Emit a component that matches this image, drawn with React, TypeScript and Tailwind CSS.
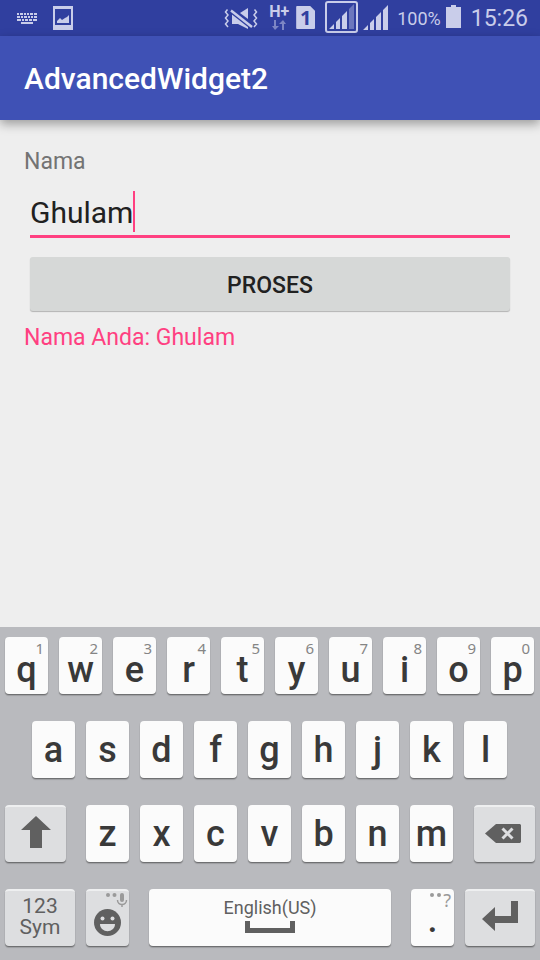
import { useState, type ReactNode } from "react";

const KEY = "flex h-[57px] rounded-[4px] shadow-[0_1px_1px_rgba(0,0,0,0.35),0_2px_1px_rgba(0,0,0,0.12)]";
const LIGHT = "bg-[#fbfbfb]";
const GREY = "bg-[#dddee0] border-t-2 border-[#eeeff0]";

function LetterKey({ letter, hint }: { letter: string; hint?: string }) {
  return (
    <button type="button" className={`${KEY} ${LIGHT} relative min-w-0 flex-1 justify-center ${hint ? "pt-[17px]" : "pt-[13px]"}`}>
      <span className="text-[36px] leading-8 font-medium text-[#393939]">{letter}</span>
      {hint && (
        <span className="absolute top-[3px] right-1 font-['Noto_Sans',sans-serif] text-[15px] leading-4 text-[#858585]">
          {hint}
        </span>
      )}
    </button>
  );
}

function GreyKey({ label, className, children }: { label: string; className: string; children: ReactNode }) {
  return (
    <button type="button" aria-label={label} className={`${KEY} ${GREY} shrink-0 justify-center text-[#606060] ${className}`}>
      {children}
    </button>
  );
}

function StatusBar() {
  return (
    <div className="flex h-9 items-start bg-[#303f9f] pr-3 pl-[17px] text-[#c9cdea]">
      <svg width="20" height="11" viewBox="0 0 20 11" fill="currentColor" className="mt-[13px] shrink-0">
        <path d="M0 0h2v2H0zM3 0h3v2H3zM7 0h2v2H7zM10 0h2v2h-2zM13 0h3v2h-3zM17 0h3v2h-3zM0 3h3v2H0zM4 3h2v2H4zM7 3h3v2H7zM11 3h2v2h-2zM14 3h2v2h-2zM17 3h3v2h-3zM0 6h4v2H0zM5 6h2v2H5zM8 6h3v2H8zM12 6h3v2h-3zM16 6h4v2h-4zM4 9h12v2H4z" />
      </svg>
      <svg width="20" height="24" viewBox="0 0 20 24" fill="currentColor" className="mt-[6px] ml-4 shrink-0">
        <path fillRule="evenodd" d="M0 0h20v24H0zM2 3v16h16V3z" />
        <path d="M4 17v-2l3-3 2 2 3-2 2-1 2-2v8z" />
      </svg>

      <svg width="34" height="22" viewBox="0 0 34 22" fill="none" className="mt-2 ml-auto shrink-0">
        <path
          d="M3.500 1.500l-2 2.500 2.500 3-2.500 3 2.500 3-2.500 3 2.500 3M30.500 1.500l2 2.500-2.500 3 2.500 3-2.500 3 2.500 3-2.500 3"
          stroke="currentColor"
          strokeWidth="1.500"
        />
        <path d="M24 0v11L16 5z" fill="currentColor" />
        <path d="M8 6v10h6l10 5v-3z" fill="currentColor" />
        <path d="M7 2.500l21 16.500" stroke="#303f9f" strokeWidth="5" />
        <path d="M7 2.500l21 16.500" stroke="currentColor" strokeWidth="2.500" />
      </svg>
      <div className="mt-1 ml-[11px] flex w-[20px] shrink-0 flex-col items-center">
        <span className="text-[16px] leading-4 font-bold">H+</span>
        <svg width="14" height="10" viewBox="0 0 14 10" fill="currentColor" className="opacity-50">
          <path d="M2 0h2v6h3l-4 4-3-4h2zM10 10h2V4h2l-3-4-4 4h3z" />
        </svg>
      </div>
      <div className="mt-[6px] ml-[7px] flex h-[23px] w-[19px] shrink-0 items-center justify-center rounded-[1px] bg-[#c9cdea] font-['Open_Sans',sans-serif] text-[20px] leading-none font-bold text-[#303f9f] [clip-path:polygon(0_0,14px_0,19px_5px,19px_100%,0_100%)]">
        1
      </div>
      <div className="mt-px ml-[10px] flex h-8 w-[33px] shrink-0 items-end justify-center rounded-[3px] border-2 border-[#c9cdea] pb-[2px]">
        <svg width="25" height="25" viewBox="0 0 25 25" fill="currentColor">
          <path d="M0 25l5-5v5zM7 18l4-4v11H7zM13 12l5-5v18h-5z" />
          <path d="M20 5l5-5v25h-5z" opacity=".4" />
        </svg>
      </div>
      <svg width="25" height="25" viewBox="0 0 25 25" fill="currentColor" className="mt-[5px] ml-[5px] shrink-0">
        <path d="M0 25l5-5v5zM7 18l4-4v11H7zM13 12l5-5v18h-5zM20 5l5-5v25h-5z" />
      </svg>
      <span className="mt-2 ml-[9px] text-[18px] leading-[22px]">100%</span>
      <svg width="15" height="23" viewBox="0 0 15 23" fill="currentColor" className="mt-[5px] ml-[5px] shrink-0">
        <path d="M5 0h5v2h5v21H0V2h5z" />
      </svg>
      <span className="mt-1 ml-[10px] text-[23px] leading-[30px]">15:26</span>
    </div>
  );
}

function Keyboard() {
  return (
    <section aria-label="Keyboard" className="flex flex-col gap-[27px] bg-[#b9babe] px-[5px] pt-[10px] pb-[14px]">
      <div className="flex gap-[11px] pr-px">
        {[..."qwertyuiop"].map((c, i) => (
          <LetterKey key={c} letter={c} hint={String((i + 1) % 10)} />
        ))}
      </div>
      <div className="flex gap-[11px] pr-7 pl-[27px]">
        {[..."asdfghjkl"].map((c) => (
          <LetterKey key={c} letter={c} />
        ))}
      </div>
      <div className="flex gap-5">
        <GreyKey label="Shift" className="w-[61px] pt-[9px]">
          <svg width="30" height="32" viewBox="0 0 30 32" fill="currentColor">
            <path d="M15 0l15 14h-9v18H9V14H0z" />
          </svg>
        </GreyKey>
        <div className="flex min-w-0 flex-1 gap-[11px] pr-px">
          {[..."zxcvbnm"].map((c) => (
            <LetterKey key={c} letter={c} />
          ))}
        </div>
        <GreyKey label="Delete" className="w-[61px] pt-[17px] pr-[3px]">
          <svg width="36" height="19" viewBox="0 0 36 19">
            <path d="M0 9.500L11 0h24l1 1v17l-1 1H11z" fill="currentColor" />
            <path d="M17.500 4.500l10 10M27.500 4.500l-10 10" stroke="#dddee0" strokeWidth="3" />
          </svg>
        </GreyKey>
      </div>
      <div className="flex gap-5">
        <div className="flex shrink-0 gap-[11px]">
          <GreyKey label="123 Sym" className="w-[70px] pt-[5px]">
            <span className="text-[21px] leading-[21px]">
              123
              <br />
              Sym
            </span>
          </GreyKey>
          <GreyKey label="Emoji" className="w-[43px]">
            <svg width="43" height="55" viewBox="0 0 43 55">
              <g fill="#9a9a9a">
                <circle cx="22" cy="4" r="2" />
                <circle cx="28.500" cy="4" r="2" />
                <rect x="34" y="2" width="4" height="9" rx="2" />
                <path d="M31.500 9c0 6 9 6 9 0M36 13v3" fill="none" stroke="#9a9a9a" strokeWidth="1.500" />
              </g>
              <circle cx="21.500" cy="31.500" r="13.500" fill="currentColor" />
              <circle cx="16.500" cy="27.500" r="2" fill="#dddee0" />
              <circle cx="26.500" cy="27.500" r="2" fill="#dddee0" />
              <path d="M14 33h15c0 9.500-15 9.500-15 0z" fill="#dddee0" />
            </svg>
          </GreyKey>
        </div>
        <button type="button" className={`${KEY} ${LIGHT} min-w-0 flex-1 flex-col items-center pt-[7px] text-[#606060]`}>
          <span className="text-[18px] leading-6">English(US)</span>
          <svg width="50" height="12" viewBox="0 0 50 12" fill="currentColor" className="mt-px">
            <path d="M0 0h5v7h40V0h5v12H0z" />
          </svg>
        </button>
        <div className="flex shrink-0 gap-[11px]">
          <button type="button" className={`${KEY} ${LIGHT} relative w-[43px] justify-center pt-[15px]`}>
            <span className="text-[36px] leading-8 font-medium text-[#393939]">.</span>
            <span className="absolute top-0 right-[3px] flex gap-[2px] font-['Noto_Sans',sans-serif] text-[18px] leading-[22px] text-[#9a9a9a]">
              <svg width="11" height="4" viewBox="0 0 11 4" fill="currentColor" className="mt-1">
                <circle cx="2" cy="2" r="2" />
                <circle cx="9" cy="2" r="2" />
              </svg>
              ?
            </span>
          </button>
          <GreyKey label="Enter" className="w-[70px] pt-[10px]">
            <svg width="36" height="30" viewBox="0 0 36 30" fill="currentColor">
              <path d="M0 18L13 6v9h16V0h7v22H13v8z" />
            </svg>
          </GreyKey>
        </div>
      </div>
    </section>
  );
}

export default function App() {
  const [name, setName] = useState("Ghulam");
  const [result, setResult] = useState("Ghulam");

  return (
    <div className="flex min-h-screen flex-col bg-[#eeeeee] font-[Roboto,sans-serif]">
      <StatusBar />
      <header className="flex h-[84px] items-center bg-[#3f51b5] px-6 pt-[2px] shadow-[0_4px_10px_rgba(0,0,0,0.35)]">
        <h1 className="text-[30px] leading-[36px] font-medium text-white">AdvancedWidget2</h1>
      </header>
      <main className="flex flex-1 flex-col px-6 pt-[27px]">
        <label htmlFor="nama" className="text-[23px] leading-[30px] text-[#737373]">
          Nama
        </label>
        <div className="mx-[6px] mt-[14px] flex h-[47px] items-start border-b-[3px] border-[#ff4081]">
          <input
            id="nama"
            value={name}
            onChange={(e) => setName(e.target.value)}
            className="h-11 max-w-full min-w-0 bg-transparent p-0 text-[30px] leading-[44px] text-[#212121] caret-transparent outline-none [field-sizing:content]"
          />
          <span className="h-[41px] w-[2px] shrink-0 bg-[#ff4081]" />
        </div>
        <button
          type="button"
          onClick={() => setResult(name)}
          className="mx-[6px] mt-[19px] h-[54px] rounded-[3px] bg-[#d6d8d7] pt-[3px] text-[23px] leading-[30px] font-medium text-[#212121] shadow-[0_1px_1px_rgba(0,0,0,0.25)]"
        >
          PROSES
        </button>
        <p className="mt-3 text-[23px] leading-[30px] text-[#ff4081]">Nama Anda: {result}</p>
      </main>
      <Keyboard />
    </div>
  );
}
